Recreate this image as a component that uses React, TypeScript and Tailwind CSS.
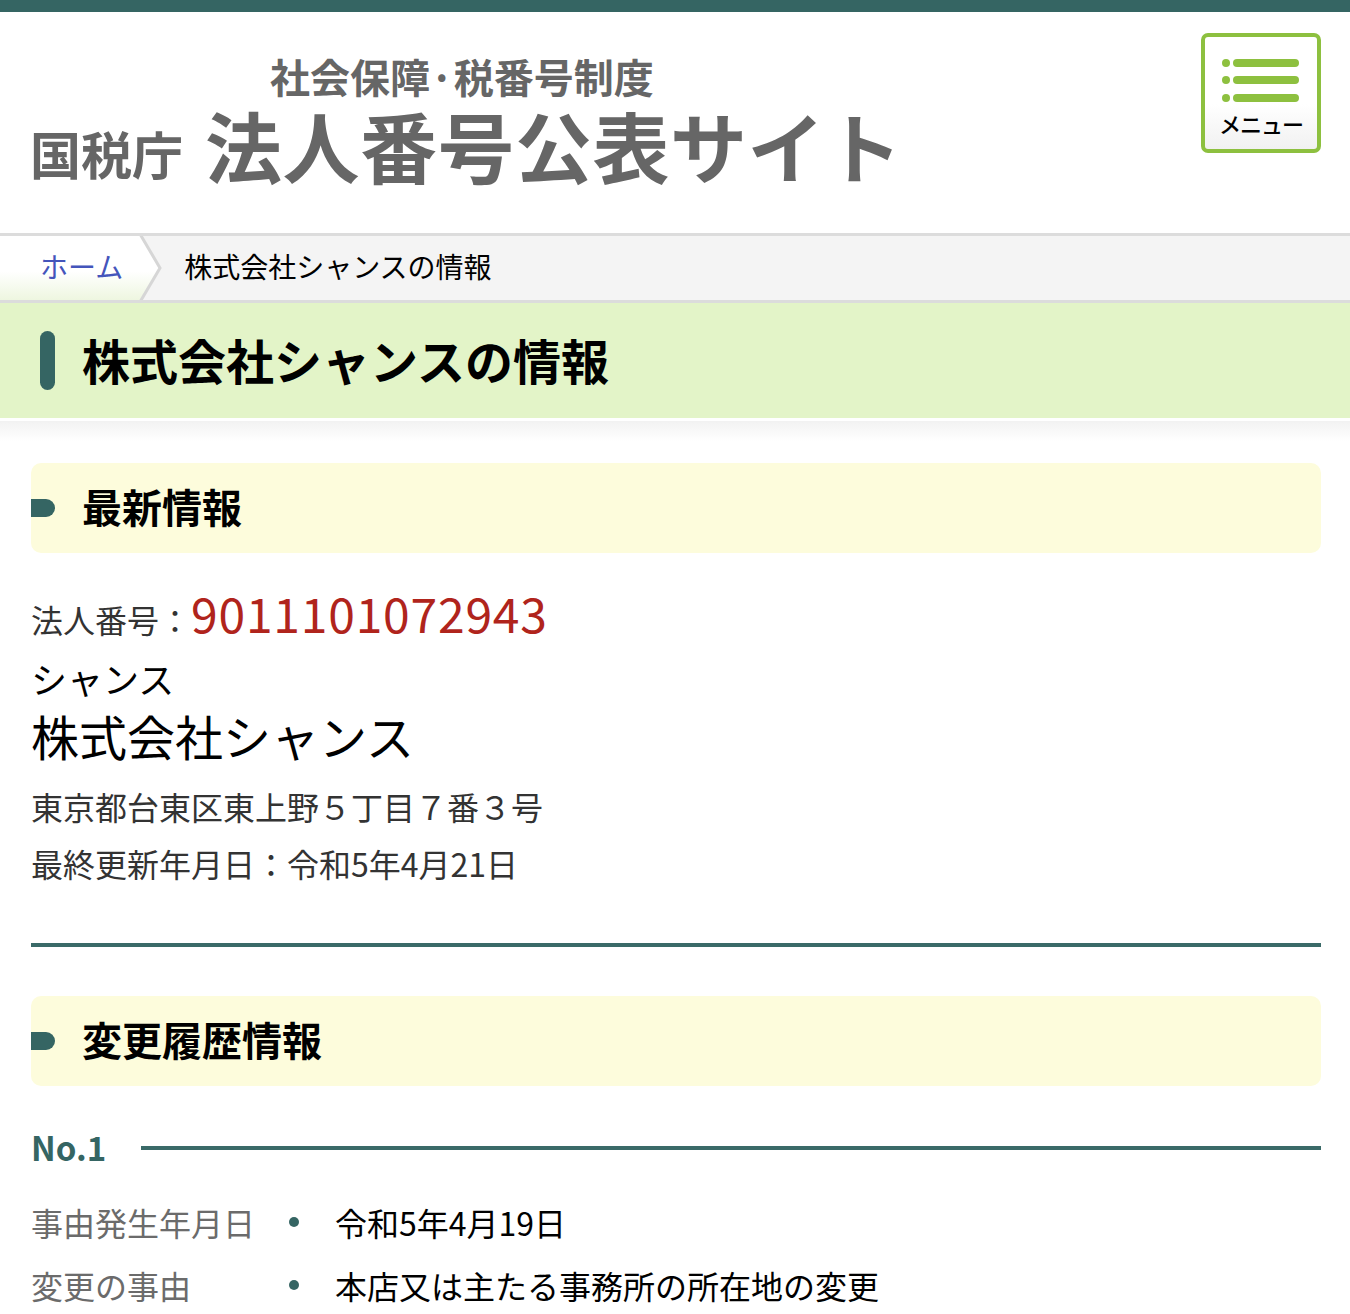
import React from 'react'

const FONT = '[font-family:"Noto_Sans_CJK_JP","Noto_Sans",sans-serif]'

function MenuButton() {
  return (
    <button className="mt-[21px] w-[120px] h-[120px] rounded-[7px] border-[4px] border-[#8dc03f] bg-gradient-to-b from-white from-[60%] to-[#f1f1f1] flex flex-col items-center shrink-0">
      <svg width="84" height="50" viewBox="0 0 84 50" className="mt-[20px]">
        {[6, 23, 41].map(y => (
          <g key={y}>
            <circle cx="7" cy={y} r="4" fill="#8dc03f" />
            <line x1="18" y1={y} x2="76" y2={y} stroke="#8dc03f" strokeWidth="8" strokeLinecap="round" />
          </g>
        ))}
      </svg>
      <span className="mt-[5px] text-[22px] font-medium leading-none text-black tracking-[-1px]">メニュー</span>
    </button>
  )
}

function SectionHead({ title }: { title: string }) {
  return (
    <div className="h-[90px] rounded-[10px] bg-[#fdfcdc] flex items-center">
      <div className="w-[24px] h-[18px] rounded-r-full bg-[#356563]" />
      <h2 className="ml-[27px] mb-[4px] text-[40px] font-bold leading-none text-black">{title}</h2>
    </div>
  )
}

function HistoryRow({ label, value }: { label: string; value: string }) {
  return (
    <div className="flex items-center text-[32px] leading-none h-[63px]">
      <span className="w-[252px] text-[#6b6b6b]">{label}</span>
      <span className="w-[10px] h-[10px] rounded-full bg-[#356563] ml-[6px]" />
      <span className="ml-[36px] text-black">{value}</span>
    </div>
  )
}

export default function App() {
  return (
    <div className={`w-[1350px] bg-white ${FONT}`}>
      {/* top bar */}
      <div className="h-[12px] bg-[#356563]" />

      {/* header */}
      <header className="h-[221px] pl-[30px] pr-[29px] flex justify-between items-start">
        <div className="pt-[44px] text-[#666666]">
          <div className="pl-[240px] text-[40px] font-bold leading-none">社会保障·税番号制度</div>
          <div className="mt-[10px] flex items-end">
            <span className="text-[51px] font-bold leading-none mb-[4px]">国税庁</span>
            <span className="ml-[22px] text-[77px] font-bold leading-none tracking-[0.5px]">法人番号公表サイト</span>
          </div>
        </div>
        <MenuButton />
      </header>

      {/* breadcrumb */}
      <nav className="h-[70px] border-y-[3px] border-[#dcdcdc] bg-[#f4f4f4] flex items-stretch text-[28px] leading-none">
        <div className="flex items-stretch">
          <a className="pl-[40px] pr-[16px] pb-[4px] flex items-center text-[#4455bb] bg-gradient-to-b from-white from-[55%] to-[#eef6e0]">ホーム</a>
          <svg width="24" height="64" viewBox="0 0 24 64" className="block">
            <defs>
              <linearGradient id="hg" x1="0" y1="0" x2="0" y2="1">
                <stop offset="55%" stopColor="#ffffff" />
                <stop offset="100%" stopColor="#eef6e0" />
              </linearGradient>
            </defs>
            <polygon points="0,0 2,0 22,32 2,64 0,64" fill="url(#hg)" />
            <polyline points="1,-2 21,32 1,66" fill="none" stroke="#d6d6d6" strokeWidth="3" />
          </svg>
        </div>
        <span className="ml-[21px] pb-[4px] flex items-center text-black">株式会社シャンスの情報</span>
      </nav>

      {/* title band */}
      <div className="h-[115px] bg-[#e3f4c8] flex items-center pl-[40px]">
        <div className="w-[15px] h-[59px] rounded-full bg-[#356563]" />
        <h1 className="ml-[27px] mb-[4px] text-[48px] font-bold leading-none text-black">株式会社シャンスの情報</h1>
      </div>
      <div className="h-[3px] bg-white" />
      <div className="h-[20px] bg-gradient-to-b from-[#f2f2f2] to-white" />

      <main className="pl-[31px] pr-[29px] pt-[22px] pb-[10px]">
        <SectionHead title="最新情報" />

        <div className="mt-[35px] flex items-baseline">
          <span className="text-[32px] text-[#333333] leading-none">法人番号：</span>
          <span className="text-[48px] text-[#b0241c] leading-none tracking-[0.8px]">9011101072943</span>
        </div>
        <div className="mt-[24px] text-[36px] leading-none text-black">シャンス</div>
        <div className="mt-[15px] text-[48px] leading-none text-black">株式会社シャンス</div>
        <div className="mt-[31px] text-[32px] leading-none text-[#333333]">東京都台東区東上野５丁目７番３号</div>
        <div className="mt-[25px] text-[32px] leading-none text-[#333333]">最終更新年月日：令和5年4月21日</div>

        <div className="mt-[64px] h-[4px] bg-[#3a6a68]" />

        <div className="mt-[49px]">
          <SectionHead title="変更履歴情報" />
        </div>

        <div className="mt-[45px] flex items-center">
          <span className="text-[33px] font-bold leading-none text-[#356563]">No.1</span>
          <div className="ml-[35px] flex-1 h-[4px] bg-[#3a6a68]" />
        </div>

        <div className="mt-[26px]">
          <HistoryRow label="事由発生年月日" value="令和5年4月19日" />
          <HistoryRow label="変更の事由" value="本店又は主たる事務所の所在地の変更" />
        </div>
      </main>
    </div>
  )
}
